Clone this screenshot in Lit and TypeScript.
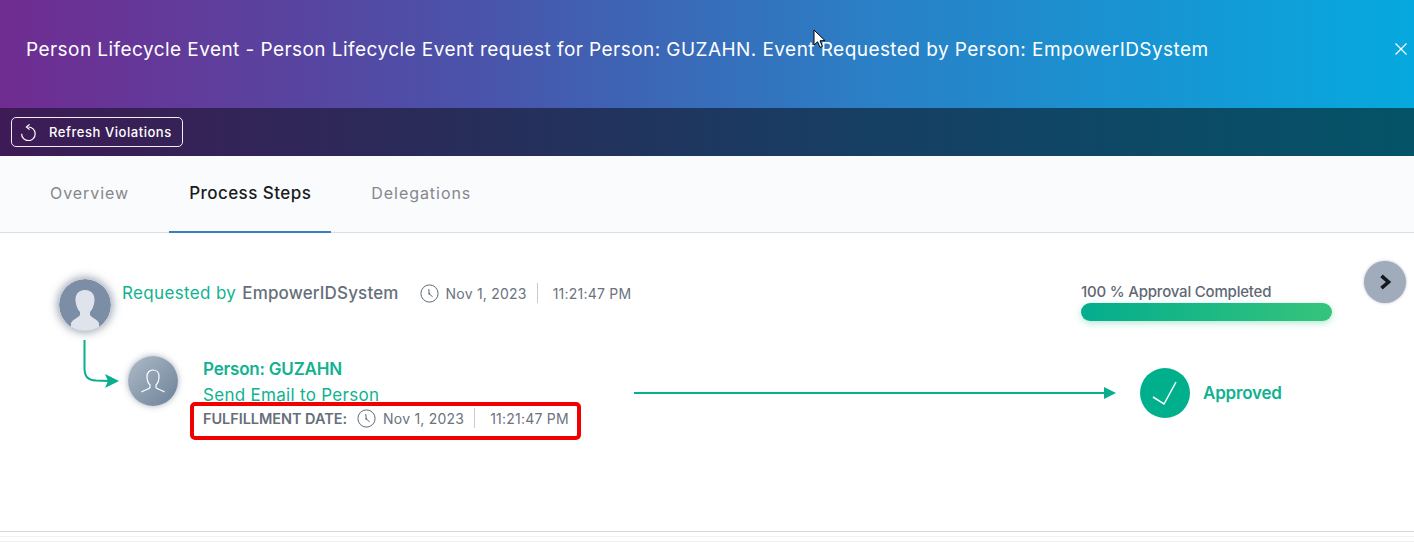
import { LitElement, html, css, svg } from 'lit';
import { customElement, state } from 'lit/decorators.js';

const clock = svg`
  <circle cx="9.5" cy="9.5" r="8.6" fill="none" stroke="#5f6976" stroke-width="1"/>
  <path d="M8.8 5 L9.2 9.8 L12.6 12.8" fill="none" stroke="#5f6976" stroke-width="1"/>
  <circle cx="9.2" cy="9.8" r="0.9" fill="#5f6976"/>`;

@customElement('app-root')
export class AppRoot extends LitElement {
  static override styles = css`
    :host {
      display: block;
      position: relative;
      width: 1414px;
      height: 542px;
      overflow: hidden;
      background: #fff;
      font-family: Inter, 'Noto Sans', sans-serif;
      color: #6b7280;
    }
    .banner {
      height: 108px;
      display: flex;
      align-items: center;
      padding: 0 6px 10px 26px;
      box-sizing: border-box;
      background: linear-gradient(90deg, #702c91 0%, #4b52a9 33%, #2a80c6 62%, #06a9df 100%);
      color: #fff;
    }
    .banner h1 {
      flex: 1;
      margin: 0;
      font-size: 19px;
      font-weight: 400;
      letter-spacing: 0.44px;
      white-space: nowrap;
    }
    .close {
      width: 14px;
      height: 14px;
      display: block;
    }
    .toolbar {
      height: 48px;
      display: flex;
      align-items: center;
      padding-left: 11px;
      background: linear-gradient(90deg, #3e1b56 0%, #2b2a58 28%, #163f64 62%, #045367 100%);
    }
    .refresh {
      display: flex;
      align-items: center;
      gap: 11px;
      height: 30px;
      width: 172px;
      box-sizing: border-box;
      padding: 0 0 0 9px;
      border: 1px solid #f1eef4;
      border-radius: 5px;
      background: transparent;
      color: #fff;
      font: 500 13px Inter, sans-serif;
      letter-spacing: 0.55px;
      white-space: nowrap;
    }
    .tabs {
      height: 77px;
      box-sizing: border-box;
      display: flex;
      gap: 20px;
      background: #fafbfd;
      border-bottom: 1px solid #dcdee2;
      padding-left: 30px;
    }
    .tab {
      box-sizing: border-box;
      height: 76px;
      padding: 0 20px 2px;
      display: flex;
      align-items: center;
      font-size: 16px;
      letter-spacing: 0.95px;
      color: #84878c;
      white-space: nowrap;
    }
    .tab.active {
      color: #1b1b1f;
      font-size: 17px;
      font-weight: 500;
      letter-spacing: 0.45px;
      border-bottom: 2px solid #3a7fc0;
      height: 77px;
      padding-bottom: 1px;
    }
    .content {
      height: 299px;
      box-sizing: border-box;
      padding-top: 28px;
      border-bottom: 1px solid #d8d8d8;
    }
    .request {
      display: flex;
      height: 79px;
      padding-left: 59px;
    }
    .avatar-main {
      width: 52px;
      height: 52px;
      margin-top: 18px;
      flex: none;
      border-radius: 50%;
      box-shadow: 0 0 9px 2px rgba(84, 100, 124, 0.55);
    }
    .meta {
      display: flex;
      align-items: center;
      height: 24px;
      margin: 20px 0 0 11px;
      font-size: 14px;
      white-space: nowrap;
    }
    .by {
      font-size: 17px;
      color: #10b28f;
      letter-spacing: 0.35px;
    }
    .name {
      margin-left: 6px;
      font-size: 17px;
      font-weight: 500;
      color: #666f7a;
      letter-spacing: 0.15px;
    }
    .clock {
      width: 19px;
      height: 19px;
      flex: none;
    }
    .meta .clock {
      margin: 1px 7px 0 21px;
    }
    .date {
      font-size: 14px;
      letter-spacing: 0.22px;
      color: #6b7280;
    }
    .sep {
      width: 1px;
      height: 20px;
      flex: none;
      background: #c9cbce;
      margin: 0 15px 0 10px;
    }
    .progress {
      width: 251px;
      margin: 21px 32px 0 auto;
      font-size: 15px;
      font-weight: 500;
      color: #5f6873;
      white-space: nowrap;
    }
    .progress .label {
      height: 18px;
      letter-spacing: -0.2px;
    }
    .bar {
      height: 18px;
      margin-top: 3px;
      border-radius: 9px;
      background: linear-gradient(90deg, #03ad8e, #36c47b);
      box-shadow: 0 2px 7px rgba(30, 190, 130, 0.35);
    }
    .next {
      width: 42px;
      height: 42px;
      flex: none;
      margin-right: 8px;
      padding: 0;
      border: none;
      border-radius: 50%;
      background: #a0abbc;
      box-shadow: 0 0 3px rgba(70, 80, 100, 0.4);
      display: flex;
      align-items: center;
      justify-content: center;
    }
    .step {
      display: flex;
      align-items: flex-start;
      padding-left: 83px;
    }
    .connector {
      width: 38px;
      height: 50px;
      flex: none;
    }
    .avatar-step {
      width: 50px;
      height: 50px;
      flex: none;
      margin: 16px 0 0 7px;
      border-radius: 50%;
      background: linear-gradient(135deg, #aebbc8, #6c8198);
      box-shadow: 0 0 6px rgba(84, 100, 124, 0.5);
      display: flex;
      align-items: center;
      justify-content: center;
    }
    .detail {
      width: 391px;
      flex: none;
      margin: 16px 0 0 12px;
    }
    .detail .title,
    .detail .action {
      padding-left: 13px;
      font-size: 17px;
      color: #10b28f;
      white-space: nowrap;
      height: 26px;
      line-height: 26px;
    }
    .detail .title {
      font-weight: 600;
      letter-spacing: -0.2px;
    }
    .detail .action {
      letter-spacing: 0.3px;
      height: 20px;
    }
    .fulfillment {
      box-sizing: border-box;
      height: 38px;
      display: flex;
      align-items: center;
      padding: 0 0 6px 9px;
      border: 4px solid #f00000;
      border-radius: 5px;
      font-size: 14px;
      white-space: nowrap;
    }
    .fulfillment b {
      font-weight: 600;
      font-size: 14.5px;
      letter-spacing: -0.05px;
      color: #666f7a;
    }
    .fulfillment .clock {
      margin: 0 7px 0 10px;
    }
    .flow {
      width: 482px;
      height: 14px;
      flex: none;
      margin: 46px 0 0 53px;
    }
    .result {
      display: flex;
      align-items: center;
      gap: 13px;
      margin: 28px 0 0 24px;
      font-size: 17px;
      font-weight: 600;
      color: #10b28f;
      letter-spacing: -0.2px;
    }
    .check {
      width: 50px;
      height: 50px;
      display: block;
    }
    .rule {
      height: 4px;
      border-bottom: 1px solid #f1f1f1;
    }
    .cursor {
      position: absolute;
      left: 813px;
      top: 29px;
      width: 14px;
      height: 20px;
    }
  `;

  @state() private tabs = ['Overview', 'Process Steps', 'Delegations'];

  override render() {
    return html`
      <div class="banner">
        <h1>Person Lifecycle Event - Person Lifecycle Event request for Person: GUZAHN. Event Requested by Person: EmpowerIDSystem</h1>
        <svg class="close" viewBox="0 0 14 14"><path d="M1.5 1.5 L12.5 12.5 M12.5 1.5 L1.5 12.5" stroke="#fff" stroke-width="1.2"/></svg>
      </div>
      <div class="toolbar">
        <button class="refresh">
          <svg width="17" height="17" viewBox="0 0 17 17"><path d="M7.3 3 A6.8 6.8 0 1 1 0.6 9.8" fill="none" stroke="#fff" stroke-width="1.2"/><path d="M8.6 0.4 L5.4 3 L8.6 5.6" fill="none" stroke="#fff" stroke-width="1.2"/></svg>
          Refresh Violations
        </button>
      </div>
      <div class="tabs">
        ${this.tabs.map((t) => html`<div class="tab ${t === 'Process Steps' ? 'active' : ''}">${t}</div>`)}
      </div>
      <div class="content">
        <div class="request">
          <svg class="avatar-main" viewBox="0 0 52 52">
            <defs><clipPath id="round"><circle cx="26" cy="26" r="26"/></clipPath></defs>
            <circle cx="26" cy="26" r="26" fill="#7c8ea5"/>
            <g clip-path="url(#round)">
              <path d="M26 11 C19 11 16 16 16.5 22 C17 27 19 31 21 33 L21 36 C19 39 14 40 12 44 L12 52 L40 52 L40 44 C38 40 33 39 31 36 L31 33 C33 31 35 27 35.5 22 C36 16 33 11 26 11 Z" fill="#dfe4ec"/>
            </g>
          </svg>
          <div class="meta">
            <span class="by">Requested by</span>
            <span class="name">EmpowerIDSystem</span>
            <svg class="clock" viewBox="0 0 19 19">${clock}</svg>
            <span class="date">Nov 1, 2023</span>
            <span class="sep"></span>
            <span class="date">11:21:47 PM</span>
          </div>
          <div class="progress">
            <div class="label">100 % Approval Completed</div>
            <div class="bar"></div>
          </div>
          <button class="next">
            <svg width="14" height="16" viewBox="0 0 14 16"><path d="M3.5 1.8 L10.5 8 L3.5 14.2" fill="none" stroke="#17191c" stroke-width="3.6"/></svg>
          </button>
        </div>
        <div class="step">
          <svg class="connector" viewBox="0 0 38 50">
            <path d="M1.5 0 L1.5 28 C1.5 37 5 40 13 40.6 L26 41" fill="none" stroke="#08ae8d" stroke-width="2"/>
            <path d="M22 34 L36 41 L22 48 L25 41 Z" fill="#08ae8d"/>
          </svg>
          <div class="avatar-step">
            <svg width="26" height="26" viewBox="0 0 26 26"><path d="M1.5 24 C4 22 9.5 21 10 19.5 L10 17 C8 15 7 12 7 8.5 C7 4.5 9.5 2 13 2 C16.5 2 19 4.5 19 8.5 C19 12 18 15 16 17 L16 19.5 C16.5 21 22 22 24.5 24" fill="none" stroke="#fff" stroke-width="1.2"/></svg>
          </div>
          <div class="detail">
            <div class="title">Person: GUZAHN</div>
            <div class="action">Send Email to Person</div>
            <div class="fulfillment">
              <b>FULFILLMENT DATE:</b>
              <svg class="clock" viewBox="0 0 19 19">${clock}</svg>
              <span class="date">Nov 1, 2023</span>
              <span class="sep"></span>
              <span class="date">11:21:47 PM</span>
            </div>
          </div>
          <svg class="flow" viewBox="0 0 482 14">
            <path d="M0 7 L472 7" stroke="#08ae8d" stroke-width="2"/>
            <path d="M470 1 L482 7 L470 13 Z" fill="#08ae8d"/>
          </svg>
          <div class="result">
            <svg class="check" viewBox="0 0 50 50">
              <circle cx="25" cy="25" r="25" fill="#00b08c"/>
              <path d="M13 29 L24 36 L36 14" fill="none" stroke="#fff" stroke-width="1.5"/>
            </svg>
            Approved
          </div>
        </div>
      </div>
      <div class="rule"></div>
      <div class="rule"></div>
      <svg class="cursor" viewBox="0 0 14 20"><path d="M1 1 L1 16 L4.6 12.8 L7 18.4 L9.4 17.4 L7 11.8 L12 11.6 Z" fill="#fff" stroke="#000" stroke-width="1"/></svg>
    `;
  }
}

declare global {
  interface HTMLElementTagNameMap {
    'app-root': AppRoot;
  }
}
